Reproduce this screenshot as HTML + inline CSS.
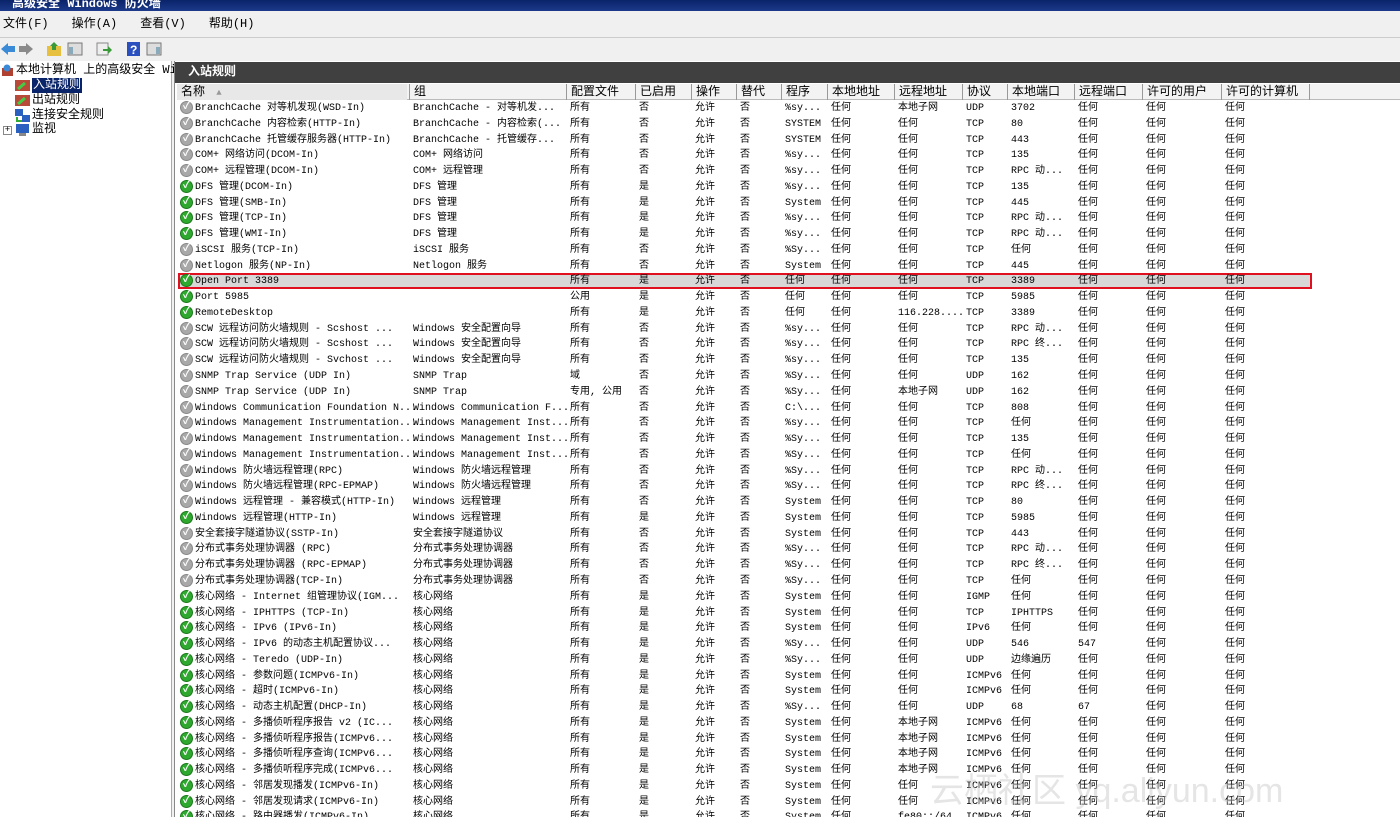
<!DOCTYPE html>
<html><head><meta charset="utf-8"><style>
*{margin:0;padding:0;box-sizing:border-box}
html,body{width:1400px;height:817px;overflow:hidden}
body{background:#f0f0f0;font-family:"Liberation Mono","Noto Sans CJK SC",monospace;font-size:10px;color:#000;position:relative}
#title{position:absolute;left:0;top:0;width:1400px;height:11px;background:linear-gradient(#0a246a,#1c3a8a);color:#fff;font-weight:bold;font-size:12px;line-height:8px;padding-left:12px;overflow:hidden}
#menu{position:absolute;top:13px;left:0;height:22px;width:1400px;font-size:12px;line-height:22px}
#menu span{margin-left:3px;margin-right:20px}
#tb{position:absolute;top:37px;left:0;height:22px;width:1400px;border-top:1px solid #ccc}
.ti{position:absolute;top:3px;width:16px;height:16px}
#left{position:absolute;left:0;top:61px;width:172px;height:756px;background:#fff;border-right:1px solid #aaa;font-size:12px}
.tr{position:absolute;left:32px;height:15px;line-height:15px;white-space:nowrap}
#right{position:absolute;left:174px;top:61px;width:1226px;height:756px;background:#fff;border-left:1px solid #888;overflow:hidden}
#hbar{position:absolute;left:0;top:1px;width:1226px;height:21px;background:#404040;color:#fff;font-weight:bold;font-size:12px;line-height:21px;padding-left:13px}
#colh{position:absolute;left:2px;top:23px;width:1224px;height:16px;background:#f3f3f3;border-bottom:1px solid #bbb;font-size:12px;line-height:16px}
#colh span{position:absolute;top:0;height:16px;border-left:1px solid #999;padding-left:4px;white-space:nowrap}
#rows{position:absolute;left:0;top:39px;width:1226px}
.r{position:relative;height:15.77px;line-height:14px;white-space:nowrap}
.r span{position:absolute;top:2px}
.r.sel{background:#d8d8d8;outline:2px solid #e01020;outline-offset:-2px;width:1134px;left:3px}
.ic{position:absolute;left:5px;top:1px;width:13px;height:13px;border-radius:50%;background:#a8a8a8;border:1px solid #888;color:#fff;font-size:10px;line-height:11px;text-align:center;font-weight:bold;font-style:normal}
.ic.g{background:#2ea82e;border-color:#1a7a1a}
.c1{left:20px}.c2{left:238px}.c3{left:395px}.c4{left:464px}.c5{left:520px}.c6{left:565px}.c7{left:610px}.c8{left:656px}.c9{left:723px}.c10{left:791px}.c11{left:836px}.c12{left:903px}.c13{left:971px}.c14{left:1050px}
.sel .ic{left:2px}.sel .c1{left:17px}.sel .c2{left:235px}.sel .c3{left:392px}.sel .c4{left:461px}.sel .c5{left:517px}.sel .c6{left:562px}.sel .c7{left:607px}.sel .c8{left:653px}.sel .c9{left:720px}.sel .c10{left:788px}.sel .c11{left:833px}.sel .c12{left:900px}.sel .c13{left:968px}.sel .c14{left:1047px}
#wm{position:absolute;left:930px;top:770px;font-family:"Liberation Sans","Noto Sans CJK SC",sans-serif;font-size:34px;line-height:42px;color:rgba(190,190,190,0.4);white-space:nowrap}
</style></head><body>
<div id="title">高级安全 Windows 防火墙</div>
<div id="menu"><span>文件(F)</span><span>操作(A)</span><span>查看(V)</span><span>帮助(H)</span></div>
<div id="tb">
<svg class="ti" style="left:0" viewBox="0 0 16 16"><path d="M1 8 L8 2 V5 H15 V11 H8 V14 Z" fill="#3a8ad8"/></svg>
<svg class="ti" style="left:18px" viewBox="0 0 16 16"><path d="M15 8 L8 2 V5 H1 V11 H8 V14 Z" fill="#8a8a8a"/></svg>
<svg class="ti" style="left:46px" viewBox="0 0 16 16"><rect x="1" y="5" width="14" height="10" fill="#e8c040"/><path d="M8 1 L12 5 H10 V9 H6 V5 H4Z" fill="#3a9a3a"/></svg>
<svg class="ti" style="left:67px" viewBox="0 0 16 16"><rect x="1" y="2" width="14" height="12" fill="#ddd" stroke="#777"/><rect x="2" y="6" width="4" height="7" fill="#8ab"/></svg>
<svg class="ti" style="left:96px" viewBox="0 0 16 16"><rect x="1" y="2" width="11" height="12" fill="#eee" stroke="#888"/><path d="M7 8 H12 V5 L16 9 L12 13 V10 H7Z" fill="#3a9a3a"/></svg>
<svg class="ti" style="left:126px" viewBox="0 0 16 16"><rect x="1" y="1" width="13" height="14" fill="#2a50c0"/><text x="4" y="13" fill="#fff" font-size="12" font-family="Liberation Sans" font-weight="bold">?</text></svg>
<svg class="ti" style="left:146px" viewBox="0 0 16 16"><rect x="1" y="2" width="14" height="12" fill="#ddd" stroke="#777"/><rect x="10" y="6" width="4" height="7" fill="#8ab"/></svg>
</div>
<div id="left">
<svg style="position:absolute;left:1px;top:3px" width="13" height="13" viewBox="0 0 13 13"><rect x="1" y="4" width="11" height="8" fill="#b04030"/><circle cx="6" cy="4" r="3.5" fill="#3a8ad8"/></svg>
<div class="tr" style="left:16px;top:2px">本地计算机 上的高级安全 Wind</div>
<svg style="position:absolute;left:15px;top:18px" width="16" height="13"><rect x="0" y="1" width="15" height="11" fill="#b84a3a"/><path d="M3 10 L10 4" stroke="#4c4" stroke-width="3"/></svg>
<div class="tr" style="top:17px;background:#0a246a;color:#fff;padding:0 1px">入站规则</div>
<svg style="position:absolute;left:15px;top:33px" width="16" height="13"><rect x="0" y="1" width="15" height="11" fill="#b84a3a"/><path d="M3 10 L10 4" stroke="#4c4" stroke-width="3"/></svg>
<div class="tr" style="top:32px">出站规则</div>
<svg style="position:absolute;left:15px;top:48px" width="16" height="13"><rect x="0" y="0" width="8" height="7" fill="#2a60c0"/><rect x="7" y="6" width="8" height="7" fill="#2a60c0"/><path d="M2 8 V12 H7" stroke="#3a3" stroke-width="2" fill="none"/></svg>
<div class="tr" style="top:47px">连接安全规则</div>
<div style="position:absolute;left:3px;top:65px;width:9px;height:9px;border:1px solid #888;font-size:9px;line-height:7px;text-align:center">+</div>
<svg style="position:absolute;left:15px;top:62px" width="16" height="14"><rect x="1" y="1" width="13" height="9" fill="#2a60c0"/><rect x="4" y="10" width="7" height="3" fill="#888"/></svg>
<div class="tr" style="top:61px">监视</div>
</div>
<div id="right">
<div id="hbar">入站规则</div>
<div id="colh">
<span style="left:0;border-left:0;width:230px;background:#e8e8e8">名称 <span style="position:static;border:0;color:#999;font-size:9px;padding-left:4px">▲</span></span>
<span style="left:232px">组</span><span style="left:389px">配置文件</span><span style="left:458px">已启用</span><span style="left:514px">操作</span><span style="left:559px">替代</span><span style="left:604px">程序</span><span style="left:650px">本地地址</span><span style="left:717px">远程地址</span><span style="left:785px">协议</span><span style="left:830px">本地端口</span><span style="left:897px">远程端口</span><span style="left:965px">许可的用户</span><span style="left:1044px">许可的计算机</span><span style="left:1132px;width:1px"></span>
</div>
<div id="rows">
<div class="r"><i class="ic">✓</i><span class="c1">BranchCache 对等机发现(WSD-In)</span><span class="c2">BranchCache - 对等机发...</span><span class="c3">所有</span><span class="c4">否</span><span class="c5">允许</span><span class="c6">否</span><span class="c7">%sy...</span><span class="c8">任何</span><span class="c9">本地子网</span><span class="c10">UDP</span><span class="c11">3702</span><span class="c12">任何</span><span class="c13">任何</span><span class="c14">任何</span></div>
<div class="r"><i class="ic">✓</i><span class="c1">BranchCache 内容检索(HTTP-In)</span><span class="c2">BranchCache - 内容检索(...</span><span class="c3">所有</span><span class="c4">否</span><span class="c5">允许</span><span class="c6">否</span><span class="c7">SYSTEM</span><span class="c8">任何</span><span class="c9">任何</span><span class="c10">TCP</span><span class="c11">80</span><span class="c12">任何</span><span class="c13">任何</span><span class="c14">任何</span></div>
<div class="r"><i class="ic">✓</i><span class="c1">BranchCache 托管缓存服务器(HTTP-In)</span><span class="c2">BranchCache - 托管缓存...</span><span class="c3">所有</span><span class="c4">否</span><span class="c5">允许</span><span class="c6">否</span><span class="c7">SYSTEM</span><span class="c8">任何</span><span class="c9">任何</span><span class="c10">TCP</span><span class="c11">443</span><span class="c12">任何</span><span class="c13">任何</span><span class="c14">任何</span></div>
<div class="r"><i class="ic">✓</i><span class="c1">COM+ 网络访问(DCOM-In)</span><span class="c2">COM+ 网络访问</span><span class="c3">所有</span><span class="c4">否</span><span class="c5">允许</span><span class="c6">否</span><span class="c7">%sy...</span><span class="c8">任何</span><span class="c9">任何</span><span class="c10">TCP</span><span class="c11">135</span><span class="c12">任何</span><span class="c13">任何</span><span class="c14">任何</span></div>
<div class="r"><i class="ic">✓</i><span class="c1">COM+ 远程管理(DCOM-In)</span><span class="c2">COM+ 远程管理</span><span class="c3">所有</span><span class="c4">否</span><span class="c5">允许</span><span class="c6">否</span><span class="c7">%sy...</span><span class="c8">任何</span><span class="c9">任何</span><span class="c10">TCP</span><span class="c11">RPC 动...</span><span class="c12">任何</span><span class="c13">任何</span><span class="c14">任何</span></div>
<div class="r"><i class="ic g">✓</i><span class="c1">DFS 管理(DCOM-In)</span><span class="c2">DFS 管理</span><span class="c3">所有</span><span class="c4">是</span><span class="c5">允许</span><span class="c6">否</span><span class="c7">%sy...</span><span class="c8">任何</span><span class="c9">任何</span><span class="c10">TCP</span><span class="c11">135</span><span class="c12">任何</span><span class="c13">任何</span><span class="c14">任何</span></div>
<div class="r"><i class="ic g">✓</i><span class="c1">DFS 管理(SMB-In)</span><span class="c2">DFS 管理</span><span class="c3">所有</span><span class="c4">是</span><span class="c5">允许</span><span class="c6">否</span><span class="c7">System</span><span class="c8">任何</span><span class="c9">任何</span><span class="c10">TCP</span><span class="c11">445</span><span class="c12">任何</span><span class="c13">任何</span><span class="c14">任何</span></div>
<div class="r"><i class="ic g">✓</i><span class="c1">DFS 管理(TCP-In)</span><span class="c2">DFS 管理</span><span class="c3">所有</span><span class="c4">是</span><span class="c5">允许</span><span class="c6">否</span><span class="c7">%sy...</span><span class="c8">任何</span><span class="c9">任何</span><span class="c10">TCP</span><span class="c11">RPC 动...</span><span class="c12">任何</span><span class="c13">任何</span><span class="c14">任何</span></div>
<div class="r"><i class="ic g">✓</i><span class="c1">DFS 管理(WMI-In)</span><span class="c2">DFS 管理</span><span class="c3">所有</span><span class="c4">是</span><span class="c5">允许</span><span class="c6">否</span><span class="c7">%sy...</span><span class="c8">任何</span><span class="c9">任何</span><span class="c10">TCP</span><span class="c11">RPC 动...</span><span class="c12">任何</span><span class="c13">任何</span><span class="c14">任何</span></div>
<div class="r"><i class="ic">✓</i><span class="c1">iSCSI 服务(TCP-In)</span><span class="c2">iSCSI 服务</span><span class="c3">所有</span><span class="c4">否</span><span class="c5">允许</span><span class="c6">否</span><span class="c7">%Sy...</span><span class="c8">任何</span><span class="c9">任何</span><span class="c10">TCP</span><span class="c11">任何</span><span class="c12">任何</span><span class="c13">任何</span><span class="c14">任何</span></div>
<div class="r"><i class="ic">✓</i><span class="c1">Netlogon 服务(NP-In)</span><span class="c2">Netlogon 服务</span><span class="c3">所有</span><span class="c4">否</span><span class="c5">允许</span><span class="c6">否</span><span class="c7">System</span><span class="c8">任何</span><span class="c9">任何</span><span class="c10">TCP</span><span class="c11">445</span><span class="c12">任何</span><span class="c13">任何</span><span class="c14">任何</span></div>
<div class="r sel"><i class="ic g">✓</i><span class="c1">Open Port 3389</span><span class="c3">所有</span><span class="c4">是</span><span class="c5">允许</span><span class="c6">否</span><span class="c7">任何</span><span class="c8">任何</span><span class="c9">任何</span><span class="c10">TCP</span><span class="c11">3389</span><span class="c12">任何</span><span class="c13">任何</span><span class="c14">任何</span></div>
<div class="r"><i class="ic g">✓</i><span class="c1">Port 5985</span><span class="c3">公用</span><span class="c4">是</span><span class="c5">允许</span><span class="c6">否</span><span class="c7">任何</span><span class="c8">任何</span><span class="c9">任何</span><span class="c10">TCP</span><span class="c11">5985</span><span class="c12">任何</span><span class="c13">任何</span><span class="c14">任何</span></div>
<div class="r"><i class="ic g">✓</i><span class="c1">RemoteDesktop</span><span class="c3">所有</span><span class="c4">是</span><span class="c5">允许</span><span class="c6">否</span><span class="c7">任何</span><span class="c8">任何</span><span class="c9">116.228....</span><span class="c10">TCP</span><span class="c11">3389</span><span class="c12">任何</span><span class="c13">任何</span><span class="c14">任何</span></div>
<div class="r"><i class="ic">✓</i><span class="c1">SCW 远程访问防火墙规则 - Scshost ...</span><span class="c2">Windows 安全配置向导</span><span class="c3">所有</span><span class="c4">否</span><span class="c5">允许</span><span class="c6">否</span><span class="c7">%sy...</span><span class="c8">任何</span><span class="c9">任何</span><span class="c10">TCP</span><span class="c11">RPC 动...</span><span class="c12">任何</span><span class="c13">任何</span><span class="c14">任何</span></div>
<div class="r"><i class="ic">✓</i><span class="c1">SCW 远程访问防火墙规则 - Scshost ...</span><span class="c2">Windows 安全配置向导</span><span class="c3">所有</span><span class="c4">否</span><span class="c5">允许</span><span class="c6">否</span><span class="c7">%sy...</span><span class="c8">任何</span><span class="c9">任何</span><span class="c10">TCP</span><span class="c11">RPC 终...</span><span class="c12">任何</span><span class="c13">任何</span><span class="c14">任何</span></div>
<div class="r"><i class="ic">✓</i><span class="c1">SCW 远程访问防火墙规则 - Svchost ...</span><span class="c2">Windows 安全配置向导</span><span class="c3">所有</span><span class="c4">否</span><span class="c5">允许</span><span class="c6">否</span><span class="c7">%sy...</span><span class="c8">任何</span><span class="c9">任何</span><span class="c10">TCP</span><span class="c11">135</span><span class="c12">任何</span><span class="c13">任何</span><span class="c14">任何</span></div>
<div class="r"><i class="ic">✓</i><span class="c1">SNMP Trap Service (UDP In)</span><span class="c2">SNMP Trap</span><span class="c3">域</span><span class="c4">否</span><span class="c5">允许</span><span class="c6">否</span><span class="c7">%Sy...</span><span class="c8">任何</span><span class="c9">任何</span><span class="c10">UDP</span><span class="c11">162</span><span class="c12">任何</span><span class="c13">任何</span><span class="c14">任何</span></div>
<div class="r"><i class="ic">✓</i><span class="c1">SNMP Trap Service (UDP In)</span><span class="c2">SNMP Trap</span><span class="c3">专用, 公用</span><span class="c4">否</span><span class="c5">允许</span><span class="c6">否</span><span class="c7">%Sy...</span><span class="c8">任何</span><span class="c9">本地子网</span><span class="c10">UDP</span><span class="c11">162</span><span class="c12">任何</span><span class="c13">任何</span><span class="c14">任何</span></div>
<div class="r"><i class="ic">✓</i><span class="c1">Windows Communication Foundation N...</span><span class="c2">Windows Communication F...</span><span class="c3">所有</span><span class="c4">否</span><span class="c5">允许</span><span class="c6">否</span><span class="c7">C:\...</span><span class="c8">任何</span><span class="c9">任何</span><span class="c10">TCP</span><span class="c11">808</span><span class="c12">任何</span><span class="c13">任何</span><span class="c14">任何</span></div>
<div class="r"><i class="ic">✓</i><span class="c1">Windows Management Instrumentation...</span><span class="c2">Windows Management Inst...</span><span class="c3">所有</span><span class="c4">否</span><span class="c5">允许</span><span class="c6">否</span><span class="c7">%sy...</span><span class="c8">任何</span><span class="c9">任何</span><span class="c10">TCP</span><span class="c11">任何</span><span class="c12">任何</span><span class="c13">任何</span><span class="c14">任何</span></div>
<div class="r"><i class="ic">✓</i><span class="c1">Windows Management Instrumentation...</span><span class="c2">Windows Management Inst...</span><span class="c3">所有</span><span class="c4">否</span><span class="c5">允许</span><span class="c6">否</span><span class="c7">%Sy...</span><span class="c8">任何</span><span class="c9">任何</span><span class="c10">TCP</span><span class="c11">135</span><span class="c12">任何</span><span class="c13">任何</span><span class="c14">任何</span></div>
<div class="r"><i class="ic">✓</i><span class="c1">Windows Management Instrumentation...</span><span class="c2">Windows Management Inst...</span><span class="c3">所有</span><span class="c4">否</span><span class="c5">允许</span><span class="c6">否</span><span class="c7">%Sy...</span><span class="c8">任何</span><span class="c9">任何</span><span class="c10">TCP</span><span class="c11">任何</span><span class="c12">任何</span><span class="c13">任何</span><span class="c14">任何</span></div>
<div class="r"><i class="ic">✓</i><span class="c1">Windows 防火墙远程管理(RPC)</span><span class="c2">Windows 防火墙远程管理</span><span class="c3">所有</span><span class="c4">否</span><span class="c5">允许</span><span class="c6">否</span><span class="c7">%Sy...</span><span class="c8">任何</span><span class="c9">任何</span><span class="c10">TCP</span><span class="c11">RPC 动...</span><span class="c12">任何</span><span class="c13">任何</span><span class="c14">任何</span></div>
<div class="r"><i class="ic">✓</i><span class="c1">Windows 防火墙远程管理(RPC-EPMAP)</span><span class="c2">Windows 防火墙远程管理</span><span class="c3">所有</span><span class="c4">否</span><span class="c5">允许</span><span class="c6">否</span><span class="c7">%Sy...</span><span class="c8">任何</span><span class="c9">任何</span><span class="c10">TCP</span><span class="c11">RPC 终...</span><span class="c12">任何</span><span class="c13">任何</span><span class="c14">任何</span></div>
<div class="r"><i class="ic">✓</i><span class="c1">Windows 远程管理 - 兼容模式(HTTP-In)</span><span class="c2">Windows 远程管理</span><span class="c3">所有</span><span class="c4">否</span><span class="c5">允许</span><span class="c6">否</span><span class="c7">System</span><span class="c8">任何</span><span class="c9">任何</span><span class="c10">TCP</span><span class="c11">80</span><span class="c12">任何</span><span class="c13">任何</span><span class="c14">任何</span></div>
<div class="r"><i class="ic g">✓</i><span class="c1">Windows 远程管理(HTTP-In)</span><span class="c2">Windows 远程管理</span><span class="c3">所有</span><span class="c4">是</span><span class="c5">允许</span><span class="c6">否</span><span class="c7">System</span><span class="c8">任何</span><span class="c9">任何</span><span class="c10">TCP</span><span class="c11">5985</span><span class="c12">任何</span><span class="c13">任何</span><span class="c14">任何</span></div>
<div class="r"><i class="ic">✓</i><span class="c1">安全套接字隧道协议(SSTP-In)</span><span class="c2">安全套接字隧道协议</span><span class="c3">所有</span><span class="c4">否</span><span class="c5">允许</span><span class="c6">否</span><span class="c7">System</span><span class="c8">任何</span><span class="c9">任何</span><span class="c10">TCP</span><span class="c11">443</span><span class="c12">任何</span><span class="c13">任何</span><span class="c14">任何</span></div>
<div class="r"><i class="ic">✓</i><span class="c1">分布式事务处理协调器 (RPC)</span><span class="c2">分布式事务处理协调器</span><span class="c3">所有</span><span class="c4">否</span><span class="c5">允许</span><span class="c6">否</span><span class="c7">%Sy...</span><span class="c8">任何</span><span class="c9">任何</span><span class="c10">TCP</span><span class="c11">RPC 动...</span><span class="c12">任何</span><span class="c13">任何</span><span class="c14">任何</span></div>
<div class="r"><i class="ic">✓</i><span class="c1">分布式事务处理协调器 (RPC-EPMAP)</span><span class="c2">分布式事务处理协调器</span><span class="c3">所有</span><span class="c4">否</span><span class="c5">允许</span><span class="c6">否</span><span class="c7">%Sy...</span><span class="c8">任何</span><span class="c9">任何</span><span class="c10">TCP</span><span class="c11">RPC 终...</span><span class="c12">任何</span><span class="c13">任何</span><span class="c14">任何</span></div>
<div class="r"><i class="ic">✓</i><span class="c1">分布式事务处理协调器(TCP-In)</span><span class="c2">分布式事务处理协调器</span><span class="c3">所有</span><span class="c4">否</span><span class="c5">允许</span><span class="c6">否</span><span class="c7">%Sy...</span><span class="c8">任何</span><span class="c9">任何</span><span class="c10">TCP</span><span class="c11">任何</span><span class="c12">任何</span><span class="c13">任何</span><span class="c14">任何</span></div>
<div class="r"><i class="ic g">✓</i><span class="c1">核心网络 - Internet 组管理协议(IGM...</span><span class="c2">核心网络</span><span class="c3">所有</span><span class="c4">是</span><span class="c5">允许</span><span class="c6">否</span><span class="c7">System</span><span class="c8">任何</span><span class="c9">任何</span><span class="c10">IGMP</span><span class="c11">任何</span><span class="c12">任何</span><span class="c13">任何</span><span class="c14">任何</span></div>
<div class="r"><i class="ic g">✓</i><span class="c1">核心网络 - IPHTTPS (TCP-In)</span><span class="c2">核心网络</span><span class="c3">所有</span><span class="c4">是</span><span class="c5">允许</span><span class="c6">否</span><span class="c7">System</span><span class="c8">任何</span><span class="c9">任何</span><span class="c10">TCP</span><span class="c11">IPHTTPS</span><span class="c12">任何</span><span class="c13">任何</span><span class="c14">任何</span></div>
<div class="r"><i class="ic g">✓</i><span class="c1">核心网络 - IPv6 (IPv6-In)</span><span class="c2">核心网络</span><span class="c3">所有</span><span class="c4">是</span><span class="c5">允许</span><span class="c6">否</span><span class="c7">System</span><span class="c8">任何</span><span class="c9">任何</span><span class="c10">IPv6</span><span class="c11">任何</span><span class="c12">任何</span><span class="c13">任何</span><span class="c14">任何</span></div>
<div class="r"><i class="ic g">✓</i><span class="c1">核心网络 - IPv6 的动态主机配置协议...</span><span class="c2">核心网络</span><span class="c3">所有</span><span class="c4">是</span><span class="c5">允许</span><span class="c6">否</span><span class="c7">%Sy...</span><span class="c8">任何</span><span class="c9">任何</span><span class="c10">UDP</span><span class="c11">546</span><span class="c12">547</span><span class="c13">任何</span><span class="c14">任何</span></div>
<div class="r"><i class="ic g">✓</i><span class="c1">核心网络 - Teredo (UDP-In)</span><span class="c2">核心网络</span><span class="c3">所有</span><span class="c4">是</span><span class="c5">允许</span><span class="c6">否</span><span class="c7">%Sy...</span><span class="c8">任何</span><span class="c9">任何</span><span class="c10">UDP</span><span class="c11">边缘遍历</span><span class="c12">任何</span><span class="c13">任何</span><span class="c14">任何</span></div>
<div class="r"><i class="ic g">✓</i><span class="c1">核心网络 - 参数问题(ICMPv6-In)</span><span class="c2">核心网络</span><span class="c3">所有</span><span class="c4">是</span><span class="c5">允许</span><span class="c6">否</span><span class="c7">System</span><span class="c8">任何</span><span class="c9">任何</span><span class="c10">ICMPv6</span><span class="c11">任何</span><span class="c12">任何</span><span class="c13">任何</span><span class="c14">任何</span></div>
<div class="r"><i class="ic g">✓</i><span class="c1">核心网络 - 超时(ICMPv6-In)</span><span class="c2">核心网络</span><span class="c3">所有</span><span class="c4">是</span><span class="c5">允许</span><span class="c6">否</span><span class="c7">System</span><span class="c8">任何</span><span class="c9">任何</span><span class="c10">ICMPv6</span><span class="c11">任何</span><span class="c12">任何</span><span class="c13">任何</span><span class="c14">任何</span></div>
<div class="r"><i class="ic g">✓</i><span class="c1">核心网络 - 动态主机配置(DHCP-In)</span><span class="c2">核心网络</span><span class="c3">所有</span><span class="c4">是</span><span class="c5">允许</span><span class="c6">否</span><span class="c7">%Sy...</span><span class="c8">任何</span><span class="c9">任何</span><span class="c10">UDP</span><span class="c11">68</span><span class="c12">67</span><span class="c13">任何</span><span class="c14">任何</span></div>
<div class="r"><i class="ic g">✓</i><span class="c1">核心网络 - 多播侦听程序报告 v2 (IC...</span><span class="c2">核心网络</span><span class="c3">所有</span><span class="c4">是</span><span class="c5">允许</span><span class="c6">否</span><span class="c7">System</span><span class="c8">任何</span><span class="c9">本地子网</span><span class="c10">ICMPv6</span><span class="c11">任何</span><span class="c12">任何</span><span class="c13">任何</span><span class="c14">任何</span></div>
<div class="r"><i class="ic g">✓</i><span class="c1">核心网络 - 多播侦听程序报告(ICMPv6...</span><span class="c2">核心网络</span><span class="c3">所有</span><span class="c4">是</span><span class="c5">允许</span><span class="c6">否</span><span class="c7">System</span><span class="c8">任何</span><span class="c9">本地子网</span><span class="c10">ICMPv6</span><span class="c11">任何</span><span class="c12">任何</span><span class="c13">任何</span><span class="c14">任何</span></div>
<div class="r"><i class="ic g">✓</i><span class="c1">核心网络 - 多播侦听程序查询(ICMPv6...</span><span class="c2">核心网络</span><span class="c3">所有</span><span class="c4">是</span><span class="c5">允许</span><span class="c6">否</span><span class="c7">System</span><span class="c8">任何</span><span class="c9">本地子网</span><span class="c10">ICMPv6</span><span class="c11">任何</span><span class="c12">任何</span><span class="c13">任何</span><span class="c14">任何</span></div>
<div class="r"><i class="ic g">✓</i><span class="c1">核心网络 - 多播侦听程序完成(ICMPv6...</span><span class="c2">核心网络</span><span class="c3">所有</span><span class="c4">是</span><span class="c5">允许</span><span class="c6">否</span><span class="c7">System</span><span class="c8">任何</span><span class="c9">本地子网</span><span class="c10">ICMPv6</span><span class="c11">任何</span><span class="c12">任何</span><span class="c13">任何</span><span class="c14">任何</span></div>
<div class="r"><i class="ic g">✓</i><span class="c1">核心网络 - 邻居发现播发(ICMPv6-In)</span><span class="c2">核心网络</span><span class="c3">所有</span><span class="c4">是</span><span class="c5">允许</span><span class="c6">否</span><span class="c7">System</span><span class="c8">任何</span><span class="c9">任何</span><span class="c10">ICMPv6</span><span class="c11">任何</span><span class="c12">任何</span><span class="c13">任何</span><span class="c14">任何</span></div>
<div class="r"><i class="ic g">✓</i><span class="c1">核心网络 - 邻居发现请求(ICMPv6-In)</span><span class="c2">核心网络</span><span class="c3">所有</span><span class="c4">是</span><span class="c5">允许</span><span class="c6">否</span><span class="c7">System</span><span class="c8">任何</span><span class="c9">任何</span><span class="c10">ICMPv6</span><span class="c11">任何</span><span class="c12">任何</span><span class="c13">任何</span><span class="c14">任何</span></div>
<div class="r"><i class="ic g">✓</i><span class="c1">核心网络 - 路由器播发(ICMPv6-In)</span><span class="c2">核心网络</span><span class="c3">所有</span><span class="c4">是</span><span class="c5">允许</span><span class="c6">否</span><span class="c7">System</span><span class="c8">任何</span><span class="c9">fe80::/64</span><span class="c10">ICMPv6</span><span class="c11">任何</span><span class="c12">任何</span><span class="c13">任何</span><span class="c14">任何</span></div>
</div>
</div>
<div id="wm">云栖社区 yq.aliyun.com</div>
</body></html>
